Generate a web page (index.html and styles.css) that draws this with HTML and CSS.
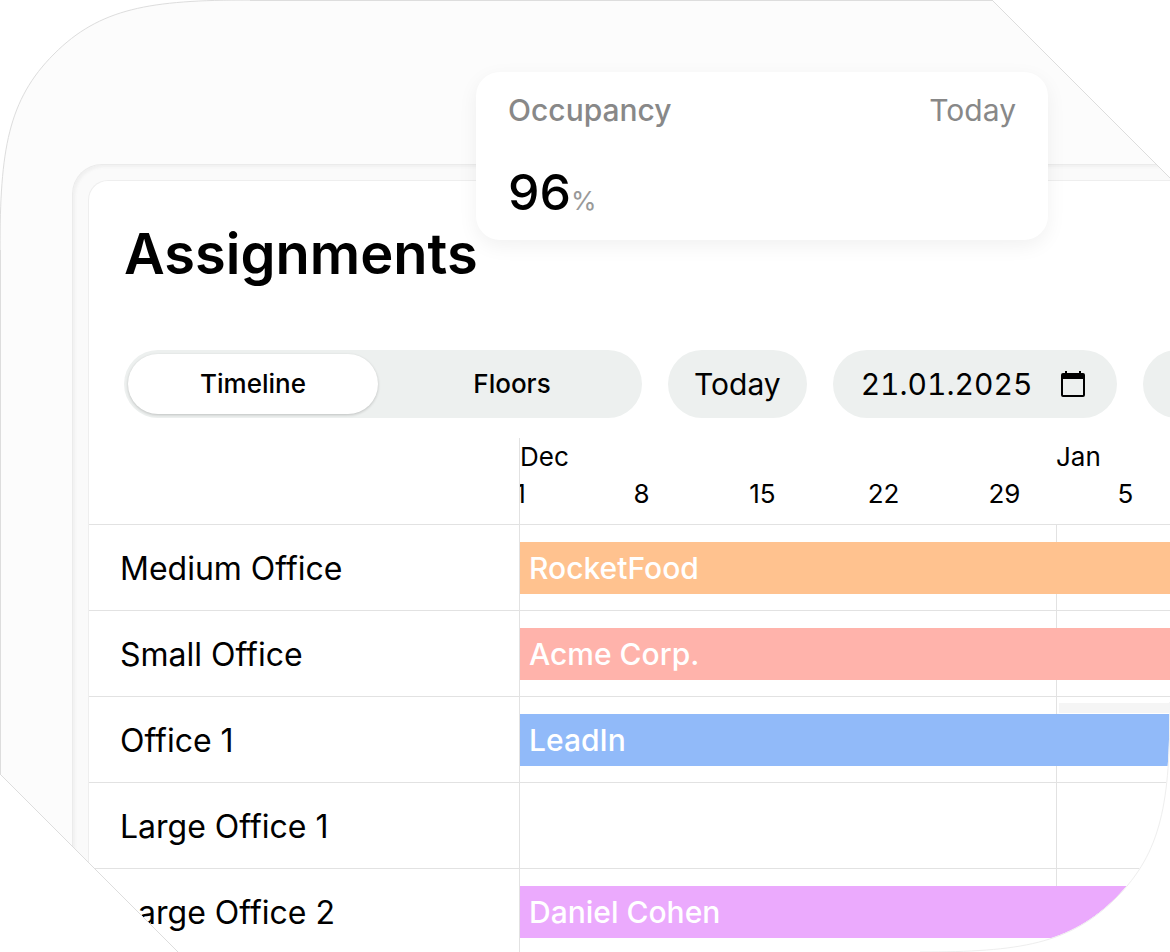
FILE: index.html
```html
<!DOCTYPE html>
<html lang="en">

<head>
	<meta charset="UTF-8">
	<title>Assignments</title>
	<link rel="stylesheet" href="styles.css">
</head>

<body>
	<div class="stage">
		<div class="frame">
			<main class="panel">
				<h1>Assignments</h1>
				<div class="toolbar">
					<div class="tabs">
						<button type="button" class="current">Timeline</button>
						<button type="button">Floors</button>
					</div>
					<button type="button" class="pill">Today</button>
					<label class="pill date">
						<input type="text" value="21.01.2025" aria-label="Date">
						<svg width="24" height="26" viewBox="0 0 24 26">
							<path d="M4 0h2v2h12V0h2v2h2a2 2 0 0 1 2 2v20a2 2 0 0 1-2 2H2a2 2 0 0 1-2-2V4a2 2 0 0 1 2-2h2zM2 8v16h20V8z" fill-rule="evenodd" />
						</svg>
					</label>
					<button type="button" class="pill more" aria-label="More"></button>
				</div>

				<table class="timeline">
					<thead>
						<tr>
							<th class="room"></th>
							<th class="dates">
								<div class="months"><span>Dec</span><span>Jan</span></div>
								<div class="weeks">
									<span>1</span>
									<span>8</span>
									<span>15</span>
									<span>22</span>
									<span>29</span>
									<span>5</span>
								</div>
							</th>
						</tr>
					</thead>
					<tbody>
						<tr>
							<th class="room">Medium Office</th>
							<td><div class="bar orange">RocketFood</div></td>
						</tr>
						<tr>
							<th class="room">Small Office</th>
							<td><div class="bar red">Acme Corp.</div></td>
						</tr>
						<tr>
							<th class="room">Office 1</th>
							<td>
								<div class="free"></div>
								<div class="bar blue">LeadIn</div>
							</td>
						</tr>
						<tr>
							<th class="room">Large Office 1</th>
							<td></td>
						</tr>
						<tr>
							<th class="room">Large Office 2</th>
							<td><div class="bar purple">Daniel Cohen</div></td>
						</tr>
					</tbody>
				</table>
			</main>
		</div>

		<!-- outline of the stage, one piece for each corner -->
		<svg class="corner top left" width="250" height="250" viewBox="0 0 250 250">
			<path class="cut" d="M0 0V250C0 150 8 100 54 54C100 8 150 0 250 0z" />
			<path class="line" d="M0 250C0 150 8 100 54 54C100 8 150 0 250 0" />
		</svg>
		<svg class="corner top right" width="178" height="178" viewBox="0 0 178 178">
			<path class="cut" d="M0 0H178V178z" />
			<path class="line" d="M0 0L178 178" />
		</svg>
		<svg class="corner bottom left" width="178" height="178" viewBox="0 0 178 178">
			<path class="cut" d="M0 0V178H178z" />
			<path class="line" d="M0 0L178 178" />
		</svg>
		<svg class="corner bottom right" width="250" height="250" viewBox="0 0 250 250">
			<path class="cut" d="M250 250V0C250 100 242 150 196 196C150 242 100 250 0 250z" />
			<path class="line light" d="M250 0C250 100 242 150 196 196C150 242 100 250 0 250" />
		</svg>

		<section class="card">
			<div class="card-head">
				<h2>Occupancy</h2>
				<span>Today</span>
			</div>
			<p class="value">96<small>%</small></p>
		</section>
	</div>
</body>

</html>
```
FILE: styles.css
```css
* {
	box-sizing: border-box;
}

body,
h1,
h2,
p {
	margin: 0;
}

body {
	background: #fff;
	color: #000;
	font: 26px/32px Inter, "Liberation Sans", sans-serif;
}

button,
input {
	border: 0;
	padding: 0;
	color: #000;
	font: inherit;
	background: none;
}

.stage {
	position: relative;
	height: 100vh;
	padding: 164px 0 0 72px;
	overflow: hidden;
	background: #fcfcfc;
	box-shadow: inset 1px 1px #ddd;
}

/* tablet frame, runs off the right and the bottom */
.frame {
	height: 100%;
	padding: 15px 0 0 15px;
	background: #fafafa;
	border: solid #ebebeb;
	border-width: 1px 0 0 1px;
	border-radius: 30px 0 0 0;
	box-shadow: inset 2px 2px 3px #f0f0f0;
}

.panel {
	height: 100%;
	padding-top: 38px;
	overflow: hidden;
	background: #fff;
	border: solid #eee;
	border-width: 1px 0 0 1px;
	border-radius: 20px 0 0 0;
}

h1 {
	padding-left: 35px;
	font-size: 56px;
	font-weight: 600;
	line-height: 70px;
}

/* toolbar */
.toolbar {
	display: flex;
	gap: 26px;
	margin: 61px 0 20px;
	padding-left: 35px;
}

.tabs {
	display: flex;
	flex: none;
	gap: 4px;
	width: 518px;
	height: 68px;
	padding: 4px 0 4px 4px;
	border-radius: 34px;
	background: #edf0ef;
}

.tabs button {
	flex: 1;
	border-radius: 30px;
	font-weight: 500;
}

.tabs .current {
	flex: none;
	width: 250px;
	background: #fff;
	box-shadow: 0 1px 3px rgba(0, 0, 0, 0.2);
}

.pill {
	flex: none;
	height: 68px;
	padding: 0 26px;
	border-radius: 34px;
	font-size: 30px;
	background: #edf0ef;
}

.date {
	display: flex;
	align-items: center;
	gap: 18px;
	width: 284px;
	padding: 0 32px 0 28px;
}

.date input {
	flex: 1;
	min-width: 0;
	font-variant-numeric: tabular-nums;
}

.more {
	width: 140px;
}

/* timeline */
.timeline {
	width: 100%;
	table-layout: fixed;
	border-collapse: separate;
	border-spacing: 0;
}

.timeline th,
.timeline td {
	height: 86px;
	padding: 0;
	font-weight: 400;
	text-align: left;
	border-bottom: 1px solid #e2e2e2;
}

.timeline .room {
	width: 430px;
	padding: 2px 0 0 31px;
	font-size: 32px;
}

.timeline td {
	padding: 17px 0 16px;
	vertical-align: top;
	border-left: 1px solid #e2e2e2;
	background: linear-gradient(#e2e2e2, #e2e2e2) 536px 0 / 1px 100% no-repeat;
}

.timeline .dates {
	overflow: hidden;
	padding: 3px 0 14px;
	border-left: 1px solid #e2e2e2;
}

.months,
.weeks {
	display: flex;
}

.months span {
	flex: none;
	width: 536px;
}

.weeks {
	margin: 5px 0 0 -60px;
}

.weeks span {
	flex: none;
	width: 121px;
	text-align: center;
}

.bar {
	height: 52px;
	padding-left: 9px;
	color: #fff;
	font-size: 30px;
	font-weight: 500;
	line-height: 52px;
}

.orange {
	background: #ffc28f;
}

.red {
	background: #ffb3ab;
}

.blue {
	background: #91baf9;
}

.purple {
	background: #ebaafd;
}

.free {
	height: 10px;
	margin: -11px 0 1px 539px;
	background: #f5f5f5;
}

/* corners */
.corner {
	position: absolute;
	overflow: visible;
}

.top {
	top: 0;
}

.right {
	right: 0;
}

.bottom {
	bottom: 0;
}

.left {
	left: 0;
}

.cut {
	fill: #fff;
	stroke: #fff;
}

.line {
	fill: none;
	stroke: #ddd;
}

.light {
	stroke: #eee;
}

/* floating card */
.card {
	position: absolute;
	top: 72px;
	right: 122px;
	width: 572px;
	height: 168px;
	padding: 22px 32px;
	border-radius: 24px;
	background: #fff;
	box-shadow: 0 6px 20px rgba(0, 0, 0, 0.06);
}

.card-head {
	display: flex;
	justify-content: space-between;
	color: #888;
	font-size: 30px;
}

.card h2 {
	font-size: 30px;
	font-weight: 500;
}

.value {
	margin-top: 36px;
	font-size: 50px;
	font-weight: 500;
	line-height: 60px;
}

.value small {
	color: #999;
	font-size: 26px;
	font-weight: 400;
}
```
